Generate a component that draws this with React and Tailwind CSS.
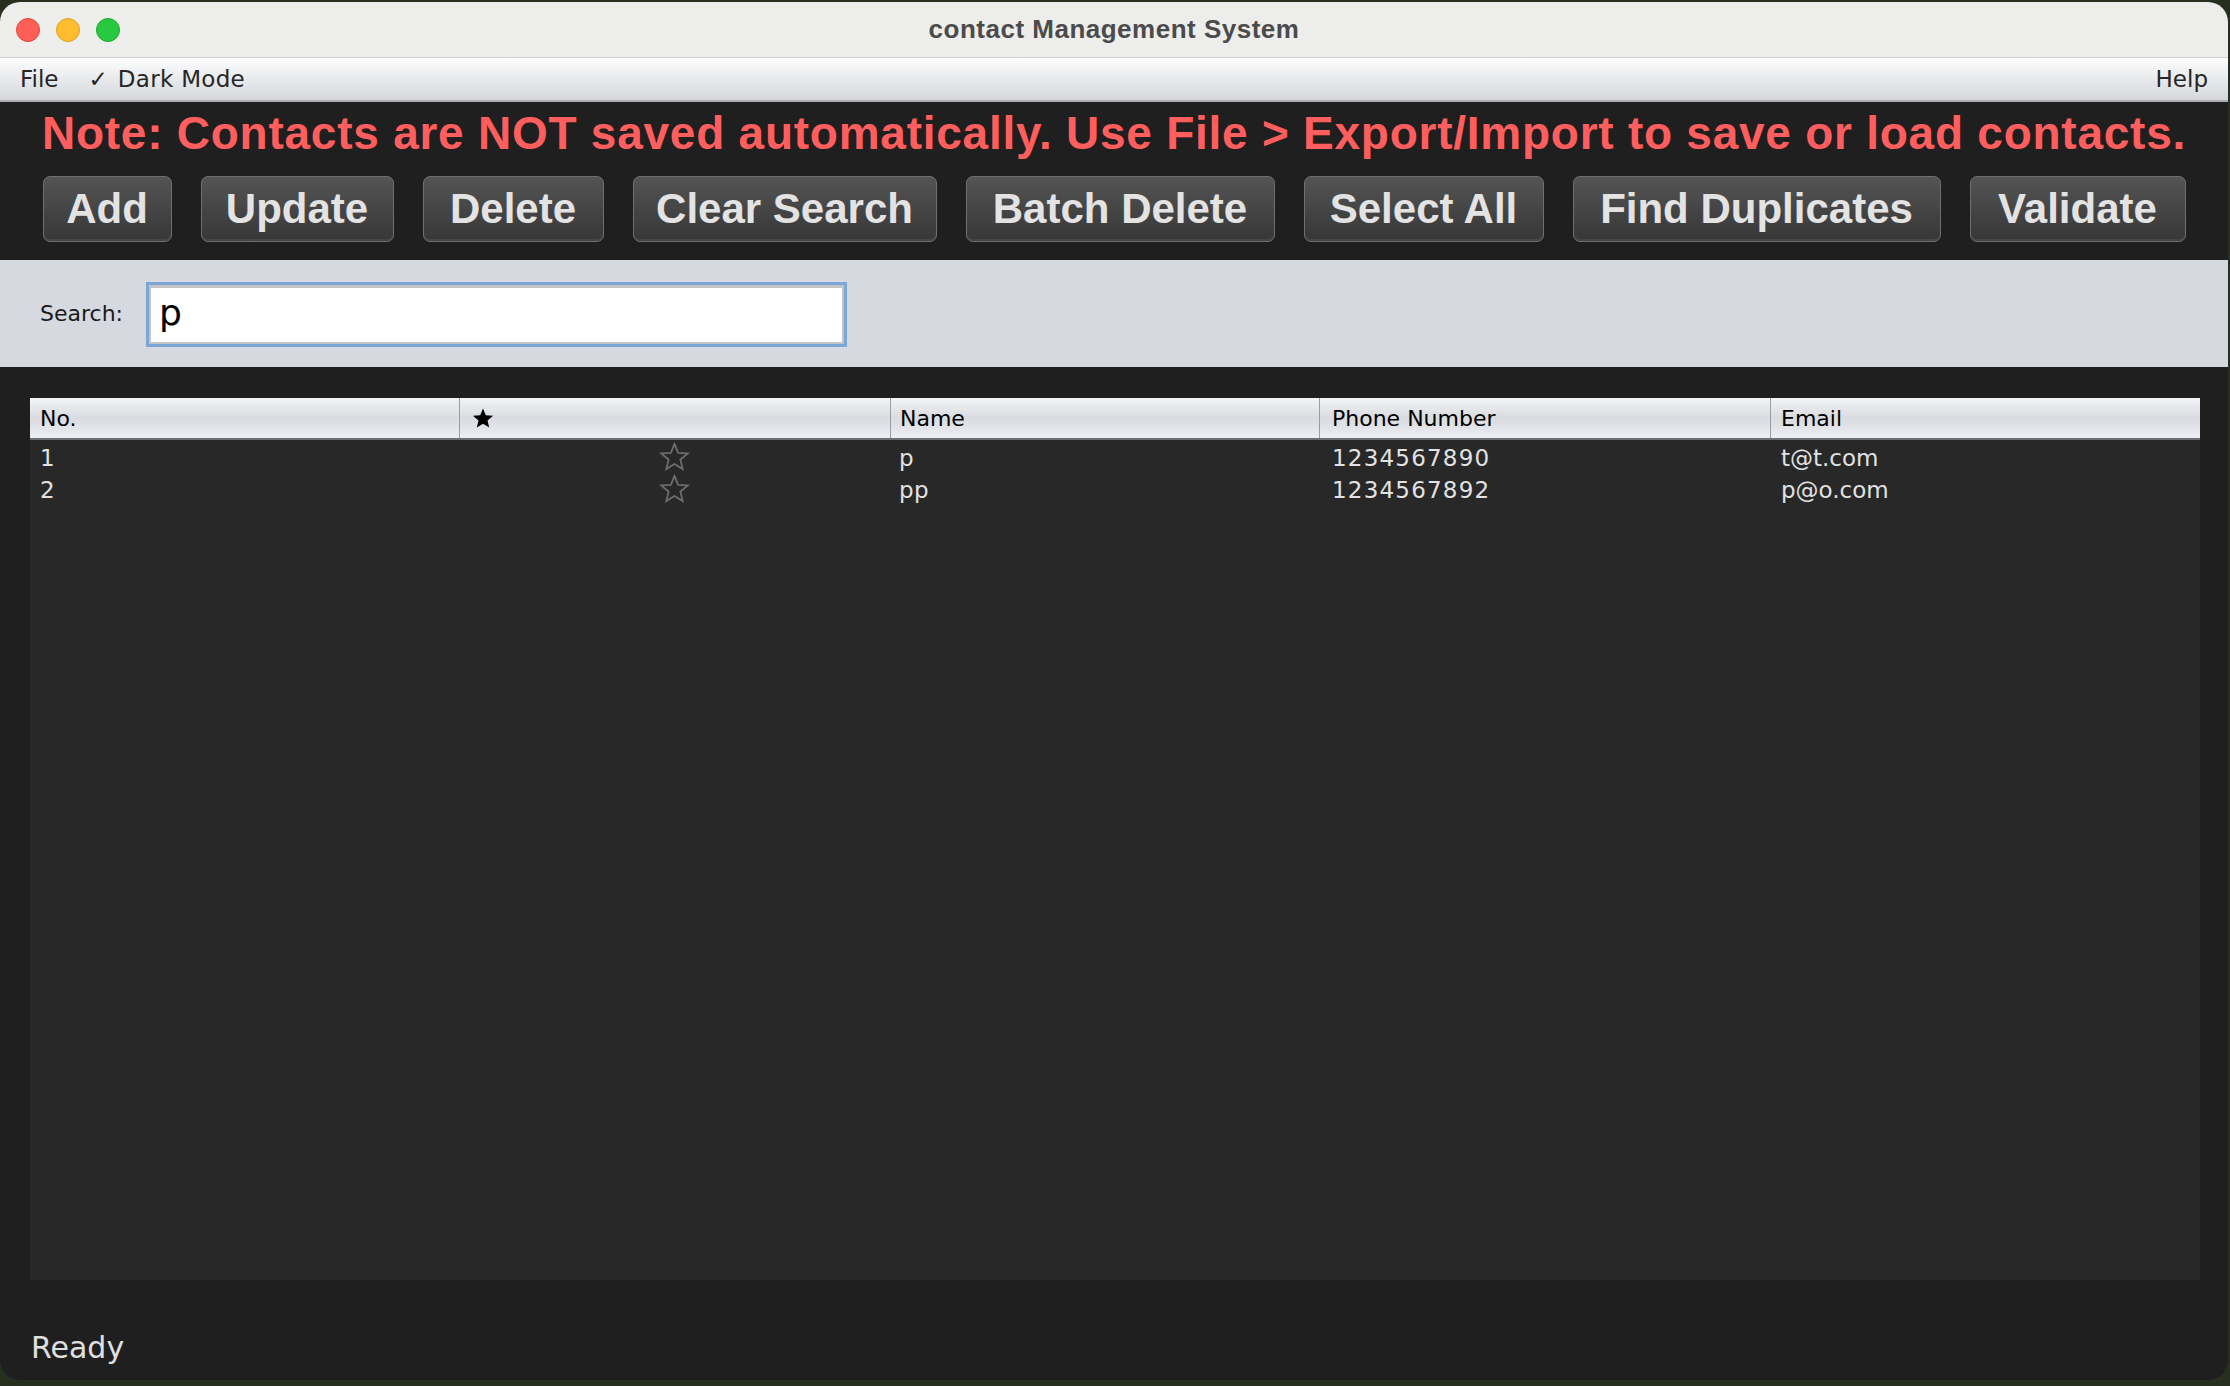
import React from "react";

const buttons = [
  { label: "Add", w: "w-[129px]" },
  { label: "Update", w: "w-[193px]" },
  { label: "Delete", w: "w-[181px]" },
  { label: "Clear Search", w: "w-[304px]" },
  { label: "Batch Delete", w: "w-[309px]" },
  { label: "Select All", w: "w-[240px]" },
  { label: "Find Duplicates", w: "w-[368px]" },
  { label: "Validate", w: "w-[216px]" },
];

const rows = [
  { no: "1", name: "p", phone: "1234567890", email: "t@t.com" },
  { no: "2", name: "pp", phone: "1234567892", email: "p@o.com" },
];

const STAR = "12,1.5 14.9,8.6 22.5,9.1 16.7,14 18.5,21.5 12,17.4 5.5,21.5 7.3,14 1.5,9.1 9.1,8.6";

function StarOutline() {
  return (
    <svg width="31" height="29" viewBox="0 0 24 23" className="block">
      <polygon points={STAR} fill="none" stroke="#6e6e6e" strokeWidth="1.4" strokeLinejoin="miter" />
    </svg>
  );
}

function StarFilled() {
  return (
    <svg width="24" height="22" viewBox="0 0 24 23" className="block">
      <polygon points={STAR} fill="#000" />
    </svg>
  );
}

const cols = "grid grid-cols-[429px_431px_429px_451px_430px]";

export default function App() {
  return (
    <div className="w-[2230px] h-[1386px] bg-[#27301f] pt-[2px] overflow-hidden">
      <div className="w-[2228px] h-[1378px] rounded-[20px] overflow-hidden flex flex-col bg-[#1f1f1f] font-['DejaVu_Sans',sans-serif]">
        {/* Title bar */}
        <div className="h-[56px] shrink-0 bg-[#ededeb] border-b border-[#d2d2d0] grid grid-cols-[1fr_auto_1fr] items-center">
          <div className="flex items-center gap-[16px] pl-[16px]">
            <span className="w-[24px] h-[24px] rounded-full bg-[#fe5f57] border border-[#e2463f]" />
            <span className="w-[24px] h-[24px] rounded-full bg-[#febc2e] border border-[#dea123]" />
            <span className="w-[24px] h-[24px] rounded-full bg-[#28c840] border border-[#1daa2c]" />
          </div>
          <div className="font-['Liberation_Sans',sans-serif] font-bold text-[26px] tracking-[0.5px] text-[#4b4b4b]">
            contact Management System
          </div>
          <div />
        </div>

        {/* Menu bar */}
        <div className="h-[44px] shrink-0 bg-gradient-to-b from-[#fdfdfd] to-[#d5d7dc] border-b-2 border-[#aeb0b6] flex items-center pl-[20px] pr-[20px] text-[23px] text-[#262626]">
          <span>File</span>
          <span className="ml-[30px]">✓</span>
          <span className="ml-[10px] tracking-[0.3px]">Dark Mode</span>
          <span className="ml-auto">Help</span>
        </div>

        {/* Note + toolbar */}
        <div className="shrink-0 h-[158px] bg-[#1f1f1f] flex flex-col">
          <div className="h-[74px] flex items-center justify-center font-['Liberation_Sans',sans-serif] font-bold text-[46px] tracking-[0.75px] text-[#ff5e5e] leading-none pb-[13px]">
            Note: Contacts are NOT saved automatically. Use File &gt; Export/Import to save or load contacts.
          </div>
          <div className="flex justify-center gap-[29px]">
            {buttons.map((b) => (
              <button
                key={b.label}
                className={`${b.w} h-[66px] rounded-[7px] border border-[#6f6f6f] bg-gradient-to-b from-[#545454] to-[#373737] shadow-[inset_0_-2px_0_rgba(255,255,255,0.07)] text-[#e3e3e3] font-['Liberation_Sans',sans-serif] font-bold text-[42px] leading-none`}
              >
                {b.label}
              </button>
            ))}
          </div>
        </div>

        {/* Search panel */}
        <div className="shrink-0 h-[107px] bg-[#d6d9e0] flex items-center pl-[40px]">
          <span className="text-[22px] text-[#1a1a1a] w-[106px]">Search:</span>
          <div className="w-[701px] h-[65px] border-[3px] border-[#7aa6d8] mt-[2px]">
            <div className="w-full h-full border-2 border-[#c4c4c4] border-t-[3px] bg-white flex items-center pl-[8px] text-[36px] text-black leading-none pb-[4px]">
              p
            </div>
          </div>
        </div>

        {/* Table area */}
        <div className="flex-1 flex flex-col pt-[31px] pl-[30px] pr-[28px]">
          <div className="w-[2170px] h-[882px] bg-[#282828] flex flex-col">
            <div className={`${cols} h-[42px] bg-gradient-to-b from-[#f3f4f6] via-[#d9dbe0] to-[#eceef3] border-b-2 border-[#6b6e76] text-[22px] text-black`}>
              <div className="flex items-center pl-[10px]">No.</div>
              <div className="flex items-center pl-[11px] border-l border-[#9c9c9c]">
                <StarFilled />
              </div>
              <div className="flex items-center pl-[9px] border-l border-[#9c9c9c]">Name</div>
              <div className="flex items-center pl-[12px] border-l border-[#9c9c9c]">Phone Number</div>
              <div className="flex items-center pl-[10px] border-l border-[#9c9c9c]">Email</div>
            </div>
            {rows.map((r) => (
              <div key={r.no} className={`${cols} h-[32px] text-[23px] text-[#e2e2e2] tracking-[0.4px] leading-none`}>
                <div className="flex items-center pl-[10px] pt-[4px]">{r.no}</div>
                <div className="flex items-center justify-center">
                  <StarOutline />
                </div>
                <div className="flex items-center pl-[9px] pt-[4px]">{r.name}</div>
                <div className="flex items-center pl-[13px] pt-[4px] tracking-[1.2px]">{r.phone}</div>
                <div className="flex items-center pl-[11px] pt-[4px] tracking-[0px]">{r.email}</div>
              </div>
            ))}
          </div>
          <div className="flex-1 flex items-end pb-[17px] pl-[1px] text-[30px] leading-none text-[#e0e0e0]">
            Ready
          </div>
        </div>
      </div>
    </div>
  );
}
